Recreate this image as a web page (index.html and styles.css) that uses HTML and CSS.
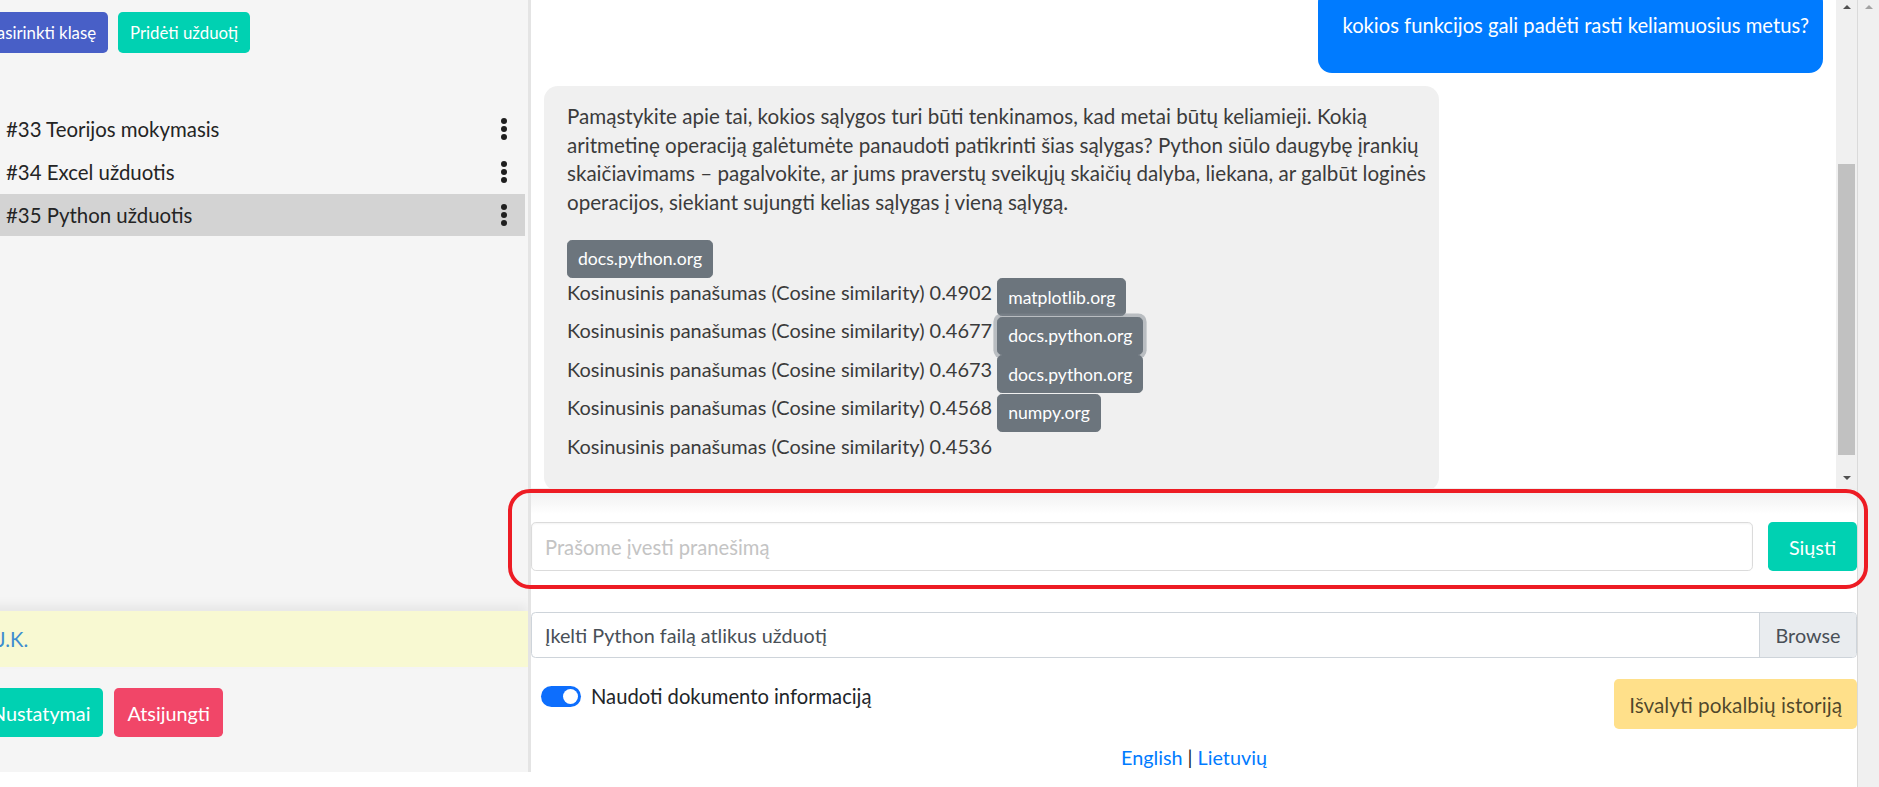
FILE: index.html
```html
<!DOCTYPE html>
<html lang="lt">
<head>
<meta charset="utf-8">
<title>Užduotys</title>
<link rel="stylesheet" href="styles.css">
</head>
<body>
<div class="app">
  <aside class="sidebar">
    <div class="sidebar-inner">
      <div class="top-actions">
        <button class="btn btn-small btn-blue">Pasirinkti klasę</button>
        <button class="btn btn-small btn-teal">Pridėti užduotį</button>
      </div>
      <ul class="tasks">
        <li class="task"><span>#33 Teorijos mokymasis</span><svg class="kebab" viewBox="0 0 6 22" width="6" height="22"><circle cx="3" cy="3" r="3"/><circle cx="3" cy="11" r="3"/><circle cx="3" cy="19" r="3"/></svg></li>
        <li class="task"><span>#34 Excel užduotis</span><svg class="kebab" viewBox="0 0 6 22" width="6" height="22"><circle cx="3" cy="3" r="3"/><circle cx="3" cy="11" r="3"/><circle cx="3" cy="19" r="3"/></svg></li>
        <li class="task active"><span>#35 Python užduotis</span><svg class="kebab" viewBox="0 0 6 22" width="6" height="22"><circle cx="3" cy="3" r="3"/><circle cx="3" cy="11" r="3"/><circle cx="3" cy="19" r="3"/></svg></li>
      </ul>
      <div class="side-footer">
        <div class="user-band"><a href="#">J.K.</a></div>
        <div class="bottom-actions">
          <button class="btn btn-normal btn-teal">Nustatymai</button>
          <button class="btn btn-normal btn-red">Atsijungti</button>
        </div>
      </div>
    </div>
  </aside>

  <main class="main">
    <div class="chat">
      <div class="chat-scroll">
        <div class="chat-content">
          <div class="msg-user">
            <p>kokios funkcijos gali padėti rasti keliamuosius metus?</p>
          </div>
          <div class="msg-bot">
            <p>Pamąstykite apie tai, kokios sąlygos turi būti tenkinamos, kad metai būtų keliamieji. Kokią<br>aritmetinę operaciją galėtumėte panaudoti patikrinti šias sąlygas? Python siūlo daugybę įrankių<br>skaičiavimams – pagalvokite, ar jums praverstų sveikųjų skaičių dalyba, liekana, ar galbūt loginės<br>operacijos, siekiant sujungti kelias sąlygas į vieną sąlygą.</p>
            <div class="src-row"><a class="badge" href="#">docs.python.org</a></div>
            <div class="src-row">Kosinusinis panašumas (Cosine similarity) 0.4902 <a class="badge" href="#">matplotlib.org</a></div>
            <div class="src-row">Kosinusinis panašumas (Cosine similarity) 0.4677 <a class="badge focus" href="#">docs.python.org</a></div>
            <div class="src-row">Kosinusinis panašumas (Cosine similarity) 0.4673 <a class="badge" href="#">docs.python.org</a></div>
            <div class="src-row">Kosinusinis panašumas (Cosine similarity) 0.4568 <a class="badge" href="#">numpy.org</a></div>
            <div class="src-row">Kosinusinis panašumas (Cosine similarity) 0.4536</div>
          </div>
        </div>
      </div>
      <div class="scrollbar">
        <span class="arrow-up"></span>
        <span class="thumb"></span>
        <span class="arrow-down"></span>
      </div>
    </div>

    <div class="composer">
      <input class="msg-input" type="text" placeholder="Prašome įvesti pranešimą">
      <button class="btn btn-normal btn-teal send">Siųsti</button>
    </div>

    <div class="file-row">
      <span class="file-label">Įkelti Python failą atlikus užduotį</span>
      <span class="file-browse">Browse</span>
    </div>

    <div class="options-row">
      <label class="switch-wrap">
        <span class="switch"><span class="knob"></span></span>
        <span>Naudoti dokumento informaciją</span>
      </label>
      <button class="btn btn-normal btn-yellow">Išvalyti pokalbių istoriją</button>
    </div>

    <div class="lang"><a href="#">English</a> | <a href="#">Lietuvių</a></div>
  </main>

  <div class="page-scroll"><span class="arrow-up light"></span></div>
</div>
<div class="annotation"></div>
</body>
</html>
```
FILE: styles.css
```css
html, body {
  margin: 0;
  padding: 0;
}
body {
  width: 1879px;
  height: 787px;
  overflow: hidden;
  background: #fff;
  font-family: "Segoe UI", Lato, "Liberation Sans", sans-serif;
  font-size: 20.2px;
  line-height: 28.8px;
  color: #212529;
}

.app {
  display: flex;
  align-items: flex-start;
  height: 787px;
}

/* Sidebar */
.sidebar {
  flex: none;
  width: 528px;
  height: 772px;
  background: #f5f5f5;
  border-right: 3px solid #e4e4e4;
  overflow: hidden;
}
.sidebar-inner {
  margin-left: -28px;
  height: 100%;
  display: flex;
  flex-direction: column;
}
.top-actions {
  display: flex;
  gap: 10px;
  padding: 12px 0 0 3px;
}
.btn {
  font-family: inherit;
  border: 0;
  border-radius: 4.8px;
  color: #fff;
  display: inline-flex;
  align-items: center;
  justify-content: center;
  white-space: nowrap;
  box-sizing: border-box;
}
.btn-small {
  font-size: 16.8px;
  height: 41px;
  padding: 0 12px;
}
.btn-normal {
  font-size: 19.8px;
  height: 49px;
  padding: 0 13px;
}
.btn-blue { background: #485fc7; }
.btn-teal { background: #00d1b2; }
.btn-red { background: #f14668; }
.btn-yellow {
  background: #ffe08a;
  color: rgba(0, 0, 0, 0.7);
  font-size: 20.8px;
  height: 50px;
  padding: 0 15px;
}

.tasks {
  list-style: none;
  margin: 55px 0 0;
  padding: 0;
}
.task {
  display: flex;
  align-items: center;
  justify-content: space-between;
  padding: 7px 18px 7px 34px;
  margin-right: 3px;
  font-size: 20.4px;
  color: #242424;
}
.task.active { background: #d3d3d3; }
.kebab { fill: #1f1f1f; flex: none; }

.side-footer {
  margin-top: auto;
  padding-bottom: 35px;
}
.user-band {
  height: 56px;
  display: flex;
  align-items: center;
  padding-left: 25px;
  background: #f8f9d2;
  box-shadow: 0 -6px 10px rgba(0, 0, 0, 0.06);
}
.user-band a { color: #3e8ed0; text-decoration: none; }
.bottom-actions {
  display: flex;
  gap: 11px;
  padding-left: 6px;
  margin-top: 21px;
}

/* Main */
.main {
  flex: none;
  width: 1326px;
  display: flex;
  flex-direction: column;
}
.chat {
  display: flex;
  height: 488px;
}
.chat-scroll {
  flex: 1;
  overflow: hidden;
}
.chat-content {
  display: flex;
  flex-direction: column;
  padding: 0 13px;
  margin-top: -12px;
}
.msg-user {
  align-self: flex-end;
  background: #007bff;
  color: #fff;
  border-radius: 14px;
  padding: 23px 14px 0 24px;
}
.msg-user p { margin: 0 0 33px; }
.msg-bot {
  align-self: flex-start;
  box-sizing: border-box;
  width: 895px;
  margin-top: 13px;
  background: #f0f0f0;
  border-radius: 14px;
  padding: 16px 23px 30px;
  color: #3b3b3b;
  font-size: 19.95px;
}
.msg-bot p {
  margin: 0 0 22px;
  font-size: 20.6px;
  white-space: nowrap;
}
.src-row { white-space: nowrap; }
.badge {
  display: inline-block;
  vertical-align: -4px;
  background: #6c757d;
  border: 1.2px solid #6c757d;
  color: #fff;
  font-size: 17.6px;
  line-height: 25.2px;
  padding: 5.4px 10px;
  border-radius: 4.8px;
  text-decoration: none;
}
.badge.focus { box-shadow: 0 0 0 3.6px rgba(130, 138, 145, 0.5); }

.scrollbar {
  flex: none;
  width: 21px;
  background: #f0f0f0;
  display: flex;
  flex-direction: column;
  align-items: center;
}
.arrow-up {
  width: 0;
  height: 0;
  border-left: 4px solid transparent;
  border-right: 4px solid transparent;
  border-bottom: 4px solid #505050;
  margin-top: 5px;
}
.arrow-up.light { border-bottom-color: #a3a3a3; }
.arrow-down {
  width: 0;
  height: 0;
  border-left: 4px solid transparent;
  border-right: 4px solid transparent;
  border-top: 4px solid #505050;
  margin-top: auto;
  margin-bottom: 8px;
}
.thumb {
  width: 17px;
  height: 291px;
  margin-top: 155px;
  background: #c1c1c1;
}

.composer {
  display: flex;
  gap: 15px;
  padding-top: 34px;
  background: linear-gradient(#eeeeee, #ffffff 26px);
}
.msg-input {
  flex: 1;
  height: 49px;
  box-sizing: border-box;
  border: 1px solid #dbdbdb;
  border-radius: 4.8px;
  padding: 0 13px;
  font-family: inherit;
  font-size: 20.2px;
  color: #363636;
  background: #fff;
  box-shadow: inset 0 1px 2px rgba(10, 10, 10, 0.05);
}
.msg-input::placeholder { color: #c4c4c4; }
.send { width: 89px; }

.file-row {
  margin-top: 41px;
  height: 46px;
  box-sizing: border-box;
  display: flex;
  border: 1px solid #ced4da;
  border-radius: 4.5px;
  overflow: hidden;
  font-size: 19.8px;
}
.file-label {
  flex: 1;
  display: flex;
  align-items: center;
  padding: 0 13px;
  color: #495057;
}
.file-browse {
  width: 96px;
  display: flex;
  align-items: center;
  justify-content: center;
  background: #e9ecef;
  border-left: 1px solid #ced4da;
  color: #495057;
}

.options-row {
  margin-top: 21px;
  display: flex;
  justify-content: space-between;
  align-items: flex-start;
}
.switch-wrap {
  display: flex;
  align-items: center;
  gap: 10px;
  margin: 3px 0 0 10px;
}
.switch {
  width: 40px;
  height: 21px;
  box-sizing: border-box;
  border-radius: 11px;
  background: #0d6efd;
  display: flex;
  align-items: center;
  justify-content: flex-end;
  padding: 0 3px;
}
.knob {
  width: 15px;
  height: 15px;
  border-radius: 50%;
  background: #fff;
}
.lang {
  margin-top: 14px;
  text-align: center;
  font-size: 19.8px;
}
.lang a { color: #007bff; text-decoration: none; }

.page-scroll {
  flex: none;
  width: 21px;
  height: 787px;
  background: #f0f0f0;
  border-left: 1px solid #dadada;
  display: flex;
  justify-content: center;
  align-items: flex-start;
}

/* red highlight drawn over the composer */
.annotation {
  position: absolute;
  left: 508px;
  top: 489px;
  width: 1360px;
  height: 100px;
  box-sizing: border-box;
  border: 4px solid #ed1c24;
  border-radius: 22px;
  pointer-events: none;
}
```
